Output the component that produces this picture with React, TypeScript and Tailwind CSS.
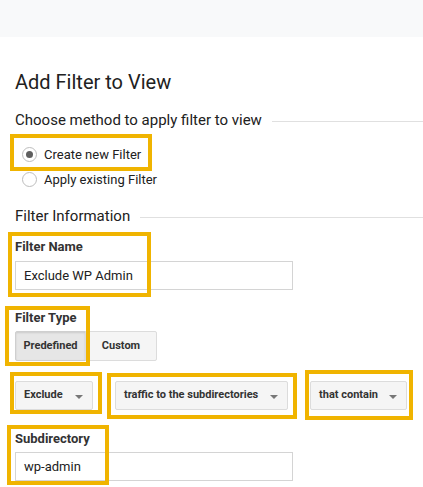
import React from 'react';

type Box = { left: number; top: number; width: number; height: number };

const highlights: Box[] = [
  { left: 10, top: 134, width: 142, height: 37 },
  { left: 8, top: 232, width: 143, height: 65 },
  { left: 5, top: 306, width: 85, height: 60 },
  { left: 10, top: 372, width: 92, height: 42 },
  { left: 107, top: 373, width: 190, height: 46 },
  { left: 305, top: 370, width: 108, height: 50 },
  { left: 7, top: 425, width: 102, height: 60 },
];

function SectionTitle({ children }: { children: React.ReactNode }) {
  return (
    <div className="flex items-center">
      <span className="text-[15px] leading-5 text-[#212121] whitespace-nowrap">{children}</span>
      <span className="ml-[10px] mt-[3px] h-px flex-1 bg-[#e0e0e0]" />
    </div>
  );
}

function Radio({ checked, label }: { checked?: boolean; label: string }) {
  return (
    <label className="flex h-[25px] items-center pl-[7px]">
      <span className="flex h-[15px] w-[15px] items-center justify-center rounded-full border border-[#bdbdbd] bg-white">
        {checked && <span className="h-[7px] w-[7px] rounded-full bg-[#5f5f5f]" />}
      </span>
      <span className="ml-[7px] text-[13px] leading-5 text-[#212121]">{label}</span>
    </label>
  );
}

function Dropdown({ label, width }: { label: string; width: string }) {
  return (
    <button
      type="button"
      className={`flex h-[29px] ${width} items-center justify-between rounded-[2px] border border-[#dcdcdc] bg-[#f5f5f5] pl-[8px] pr-[9px] text-[11px] font-bold text-[#333]`}
    >
      <span>{label}</span>
      <svg width="8" height="4" viewBox="0 0 8 4" className="mt-[2px]">
        <path d="M0 0h8L4 4z" fill="#777" />
      </svg>
    </button>
  );
}

function TextField({ value }: { value: string }) {
  return (
    <div className="flex h-[29px] w-[278px] items-center border border-[#d4d4d4] bg-white pl-[8px] text-[13px] text-[#212121]">
      {value}
    </div>
  );
}

export default function App() {
  return (
    <div className="relative h-[487px] w-full overflow-hidden bg-white font-['Roboto','Liberation_Sans',sans-serif]">
      <div className="h-[37px] bg-[#f8f9fa]" />

      <div className="pl-[15px]">
        <h1 className="mt-[33px] text-[20px] leading-6 text-[#212121]">Add Filter to View</h1>

        <div className="mt-[16px]">
          <SectionTitle>Choose method to apply filter to view</SectionTitle>
        </div>

        <div className="mt-[12px]">
          <Radio checked label="Create new Filter" />
          <Radio label="Apply existing Filter" />
        </div>

        <div className="mt-[14px]">
          <SectionTitle>Filter Information</SectionTitle>
        </div>

        <div className="mt-[12px]">
          <div className="mb-[5px] text-[13px] font-bold leading-[18px] text-[#333]">Filter Name</div>
          <TextField value="Exclude WP Admin" />
        </div>

        <div className="mt-[19px]">
          <div className="mb-[4px] text-[13px] font-bold leading-[18px] text-[#333]">Filter Type</div>
          <div className="flex">
            <button
              type="button"
              className="h-[30px] w-[71px] rounded-l-[2px] border border-[#cfcfcf] bg-[#e6e6e6] text-[11px] font-bold text-[#333] shadow-[inset_0_1px_2px_rgba(0,0,0,0.12)]"
            >
              Predefined
            </button>
            <button
              type="button"
              className="-ml-px h-[30px] w-[72px] rounded-r-[2px] border border-[#dcdcdc] bg-[#f5f5f5] text-[11px] font-bold text-[#333]"
            >
              Custom
            </button>
          </div>
        </div>

        <div className="mt-[20px] flex gap-[22px]">
          <Dropdown label="Exclude" width="w-[78px]" />
          <Dropdown label="traffic to the subdirectories" width="w-[173px]" />
          <Dropdown label="that contain" width="w-[97px]" />
        </div>

        <div className="mt-[20px]">
          <div className="mb-[4px] text-[13px] font-bold leading-[18px] text-[#333]">Subdirectory</div>
          <TextField value="wp-admin" />
        </div>
      </div>

      {highlights.map((b, i) => (
        <div
          key={i}
          className="pointer-events-none absolute border-4 border-[#f0b400]"
          style={{ left: b.left, top: b.top, width: b.width, height: b.height }}
        />
      ))}
    </div>
  );
}
